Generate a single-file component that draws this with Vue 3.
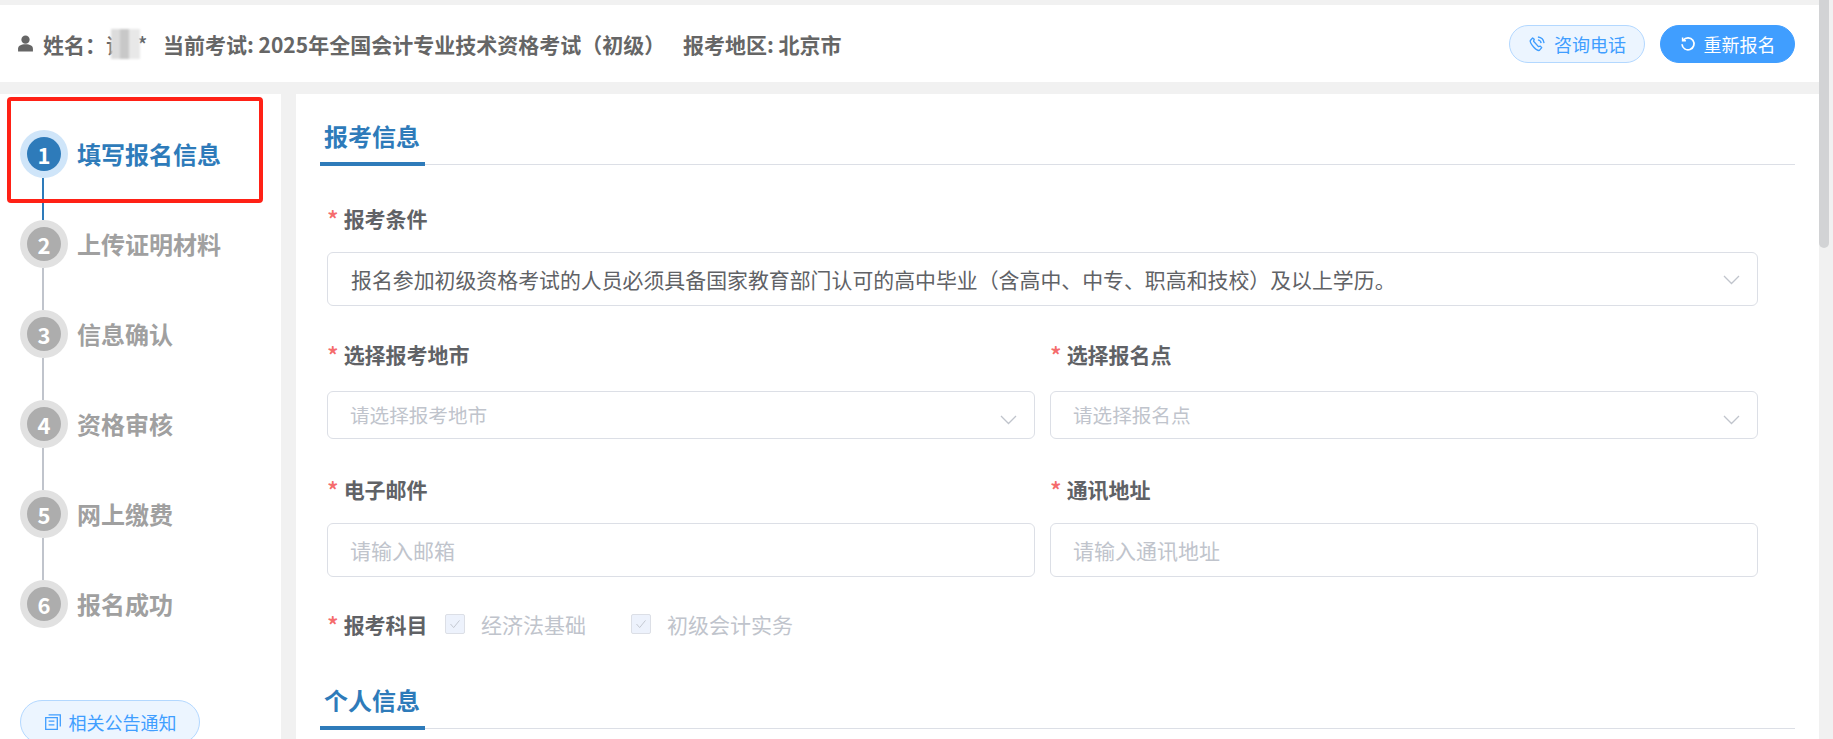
<script setup>
const steps = ['填写报名信息', '上传证明材料', '信息确认', '资格审核', '网上缴费', '报名成功']
</script>

<template>
  <div class="page">
    <div class="content">
      <header class="top">
        <div class="info">
          <svg class="person" viewBox="0 0 16 16" width="17" height="17"><circle cx="8" cy="4.4" r="3.9" fill="#666"/><path d="M1 15.5v-2.6c0-2.6 2.6-4.2 7-4.2s7 1.6 7 4.2v2.6z" fill="#666"/></svg>
          <span class="name">姓名：<span class="masked">谭*<i class="mosaic"></i>*</span></span>
          <span class="exam">当前考试: 2025年全国会计专业技术资格考试（初级）</span>
          <span class="area">报考地区: 北京市</span>
        </div>
        <div class="actions">
          <button class="btn plain">
            <svg viewBox="0 0 18 18" width="19" height="19" fill="none" stroke="#409eff" stroke-width="1.3"><path d="M2.2 6.2l2.2-2.4 1.5 1.2-.6 1.8 4.6 5.2 1.8-.5 1.3 1.4-2.2 2.6c-1.4.4-3.3-.8-5.3-3S1.7 7.6 2.2 6.2z" stroke-linejoin="round"/><path d="M9.4 2.8c3.2.3 5.4 2.5 5.8 5.8M9.4 5.6c1.7.2 2.8 1.3 3 3"/></svg>
            咨询电话
          </button>
          <button class="btn primary">
            <svg viewBox="0 0 16 16" width="16" height="16" fill="none" stroke="#fff" stroke-width="1.7"><path d="M3.3 4.1A6 6 0 1 1 2 8.3"/><path d="M2.6 1.4v3.3h3.3" stroke-width="1.5"/></svg>
            重新报名
          </button>
        </div>
      </header>

      <div class="body">
        <aside class="side">
          <div class="highlight"></div>
          <ol class="steps">
            <li v-for="(s, i) in steps" :key="s" class="step" :class="{ active: i === 0 }">
              <div class="step-head">
                <span class="dot"><span class="num">{{ i + 1 }}</span></span>
                <span class="step-text">{{ s }}</span>
              </div>
              <div v-if="i < steps.length - 1" class="line"></div>
            </li>
          </ol>
          <button class="btn plain notice">
            <svg viewBox="0 0 18 18" width="18" height="18" fill="none" stroke="#409eff" stroke-width="1.3"><path d="M1.7 4.7h11.6v11.6H1.7zM4.6 1.8h11.7v11.6M4.6 8.2h5.8M4.6 11.8h5.8"/></svg>
            相关公告通知
          </button>
        </aside>

        <main class="main">
          <div class="sec-head first"><h2 class="sec-title">报考信息</h2></div>
          <div class="form">
            <div class="field f1">
              <label class="label"><em>*</em>报考条件</label>
              <div class="control tall value">
                <span>报名参加初级资格考试的人员必须具备国家教育部门认可的高中毕业（含高中、中专、职高和技校）及以上学历。</span>
                <svg class="chev near" viewBox="0 0 17 10" width="17" height="10" fill="none" stroke="#c0c4cc" stroke-width="1.3"><path d="M1 1l7.5 7.5L16 1"/></svg>
              </div>
            </div>
            <div class="cols r2">
              <div class="field g20">
                <label class="label"><em>*</em>选择报考地市</label>
                <div class="control short ph">
                  <span>请选择报考地市</span>
                  <svg class="chev low" viewBox="0 0 17 10" width="17" height="10" fill="none" stroke="#c0c4cc" stroke-width="1.3"><path d="M1 1l7.5 7.5L16 1"/></svg>
                </div>
              </div>
              <div class="field g20">
                <label class="label"><em>*</em>选择报名点</label>
                <div class="control short ph">
                  <span>请选择报名点</span>
                  <svg class="chev low" viewBox="0 0 17 10" width="17" height="10" fill="none" stroke="#c0c4cc" stroke-width="1.3"><path d="M1 1l7.5 7.5L16 1"/></svg>
                </div>
              </div>
            </div>
            <div class="cols r3">
              <div class="field">
                <label class="label"><em>*</em>电子邮件</label>
                <div class="control tall ph wide"><span>请输入邮箱</span></div>
              </div>
              <div class="field">
                <label class="label"><em>*</em>通讯地址</label>
                <div class="control tall ph wide"><span>请输入通讯地址</span></div>
              </div>
            </div>
            <div class="subjects">
              <label class="label"><em>*</em>报考科目</label>
              <span class="check">
                <i class="box"><svg viewBox="0 0 20 20" width="20" height="20" fill="none" stroke="#c0c4cc" stroke-width="1"><path d="M5 10l3.5 4L15 6"/></svg></i>
                经济法基础
              </span>
              <span class="check">
                <i class="box"><svg viewBox="0 0 20 20" width="20" height="20" fill="none" stroke="#c0c4cc" stroke-width="1"><path d="M5 10l3.5 4L15 6"/></svg></i>
                初级会计实务
              </span>
            </div>
          </div>
          <div class="sec-head second"><h2 class="sec-title">个人信息</h2></div>
        </main>
      </div>
    </div>
    <div class="scroll"><div class="thumb"></div></div>
  </div>
</template>

<style>
html, body { margin: 0; overflow: hidden; }
</style>

<style scoped>
* { box-sizing: border-box; }
.page {
  display: flex;
  height: 739px;
  overflow: hidden;
  background: #f1f1f1;
  font-family: "Noto Sans CJK SC", "Noto Sans", sans-serif;
}
.content { flex: 1; min-width: 0; padding-top: 5px; }
.scroll { width: 14px; flex: none; }
.thumb { width: 10px; height: 248px; background: #d2d3d5; border-radius: 0 0 5px 5px; }

.top {
  height: 77px;
  background: #fff;
  display: flex;
  align-items: center;
  justify-content: space-between;
  padding: 0 24px 0 17px;
}
.info { display: flex; align-items: center; font-size: 21px; font-weight: 700; color: #666; white-space: nowrap; }
.person { margin-right: 9px; }
.name { width: 120px; }
.masked { position: relative; font-weight: 500; }
.mosaic {
  position: absolute;
  left: 5px;
  top: 0;
  width: 29px;
  height: 30px;
  filter: blur(1px);
  background: linear-gradient(90deg, #dcdcdc 0 30%, #c8c8c8 30% 62%, #e8e8e8 62% 100%);
}
.exam { width: 520px; }

.actions { display: flex; gap: 15px; }
.btn {
  display: flex;
  align-items: center;
  justify-content: center;
  gap: 7px;
  height: 38px;
  border-radius: 19px;
  font: 400 18px "Noto Sans CJK SC", "Noto Sans", sans-serif;
  padding: 0;
}
.plain { width: 136px; background: #ecf5ff; border: 1px solid #b3d8ff; color: #409eff; }
.primary { width: 135px; background: #409eff; border: 1px solid #409eff; color: #fff; gap: 8px; }

.body { display: flex; margin-top: 12px; height: 645px; }
.side { width: 281px; flex: none; margin-right: 15px; background: #fff; position: relative; padding: 36px 0 0 20px; }
.highlight {
  position: absolute;
  left: 7px;
  top: 3px;
  width: 256px;
  height: 106px;
  border: 4px solid #ff2116;
  border-radius: 4px;
  pointer-events: none;
}
.steps { list-style: none; margin: 0; padding: 0; }
.step-head { display: flex; align-items: center; height: 48px; }
.dot {
  width: 48px;
  height: 48px;
  border-radius: 50%;
  background: #e1e1e1;
  display: flex;
  align-items: center;
  justify-content: center;
  flex: none;
}
.num {
  width: 34px;
  height: 34px;
  border-radius: 50%;
  background: #adadad;
  color: #fff;
  font-size: 22px;
  font-weight: 700;
  line-height: 34px;
  text-align: center;
}
.step-text { margin: -2px 0 0 9px; font-size: 24px; font-weight: 700; color: #a0a0a0; }
.line { width: 2px; height: 42px; margin-left: 22px; background: #c0c4cc; }
.active .dot { background: #cfe5f9; }
.active .num { background: #2e7bba; }
.active .step-text { color: #2e7bba; }
.active .line { background: #2e7bba; }
.notice { width: 180px; height: 44px; border-radius: 22px; margin-top: 72px; }

.main { flex: 1; min-width: 0; background: #fff; padding: 0 24px; }
.sec-head { display: flex; align-items: flex-end; border-bottom: 1px solid #dcdfe6; }
.sec-head.first { height: 71px; }
.sec-head.second { height: 88px; }
.sec-title {
  margin: 0 0 -2px;
  width: 105px;
  padding: 0 0 8px 4px;
  font-size: 24px;
  line-height: 36px;
  font-weight: 700;
  color: #2e7bba;
  border-bottom: 4px solid #2e7bba;
}
.form { padding: 40px 37px 0 7px; }
.label { display: block; height: 30px; line-height: 26px; font-size: 21px; font-weight: 700; color: #606266; white-space: nowrap; }
.label em { font-style: normal; color: #f56c6c; margin-right: 5px; font-weight: 500; font-size: 24px; vertical-align: -2px; }
.f1 .control, .cols .field .control { margin-top: 17px; }
.cols .g20 .control { margin-top: 20px; }
.cols { display: grid; grid-template-columns: 1fr 1fr; column-gap: 15px; }
.r2 { margin-top: 35px; }
.r3 { margin-top: 37px; }
.control {
  display: flex;
  align-items: center;
  justify-content: space-between;
  border: 1px solid #dcdfe6;
  border-radius: 6px;
  padding: 0 17px 0 23px;
  font-size: 21px;
}
.tall { height: 54px; }
.short { height: 48px; }
.value { color: #606266; font-size: 20.9px; }
.ph { color: #c0c4cc; font-size: 19.6px; }
.ph.wide { font-size: 21px; }
.short span { margin-top: -1px; margin-left: -1px; }
.wide span { margin-top: -1px; margin-left: -1px; }
.chev.near { margin-top: 2px; }
.chev.low { margin-top: 10px; }
.subjects { display: flex; align-items: center; margin-top: 34px; height: 30px; }
.subjects .label { width: 118px; flex: none; }
.check { display: flex; align-items: center; font-size: 21px; line-height: 26px; height: 26px; margin-top: -4px; color: #c0c4cc; margin-right: 45px; }
.box {
  width: 20px;
  height: 20px;
  display: flex;
  align-items: center;
  justify-content: center;
  border: 1px solid #dcdfe6;
  border-radius: 2px;
  background: #edf2fc;
  margin-right: 16px;
}
</style>
